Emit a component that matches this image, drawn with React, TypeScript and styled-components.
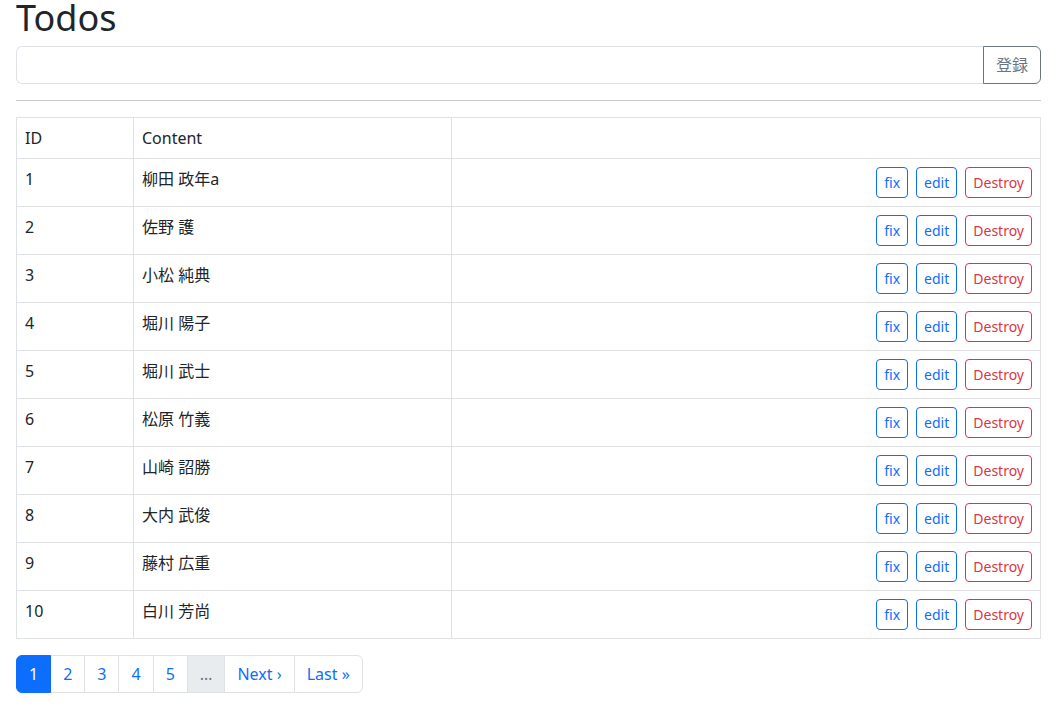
import React from 'react';
import styled, { createGlobalStyle } from 'styled-components';

const GlobalStyle = createGlobalStyle`
  * {
    box-sizing: border-box;
  }
  body {
    margin: 0;
    background: #fff;
    color: #212529;
    font-family: "Noto Sans", "Noto Sans CJK JP", sans-serif;
    font-size: 16px;
    line-height: 1.5;
  }
`;

const Page = styled.div`
  width: 1041px;
  padding-left: 16px;
`;

const Title = styled.h1`
  margin: 0 0 8px;
  font-size: 36px;
  font-weight: 400;
  line-height: 36px;
  padding-bottom: 2px;
  color: #212529;
`;

const InputGroup = styled.form`
  display: flex;
  height: 38px;
`;

const TextInput = styled.input`
  flex: 1;
  min-width: 0;
  height: 38px;
  padding: 6px 12px;
  font: inherit;
  border: 1px solid #dee2e6;
  border-right: none;
  border-radius: 6px 0 0 6px;
  outline: none;
`;

const SubmitButton = styled.button`
  height: 38px;
  padding: 6px 12px;
  font: inherit;
  white-space: nowrap;
  color: #6c757d;
  background: transparent;
  border: 1px solid #6c757d;
  border-radius: 0 6px 6px 0;
`;

const Rule = styled.hr`
  margin: 16px 0;
  border: 0;
  border-top: 1px solid #c8c9ca;
`;

const Table = styled.table`
  width: 100%;
  margin-bottom: 16px;
  border-collapse: collapse;
  font-size: 16px;
`;

const Cell = styled.td<{ $w?: number; $right?: boolean }>`
  width: ${(p) => (p.$w ? `${p.$w}px` : 'auto')};
  padding: 8px;
  border: 1px solid #dee2e6;
  vertical-align: top;
  text-align: ${(p) => (p.$right ? 'right' : 'left')};
  line-height: 24px;
`;

const Actions = styled.div`
  display: flex;
  justify-content: flex-end;
  gap: 8px;
`;

const SmallButton = styled.button<{ $danger?: boolean }>`
  height: 31px;
  padding: 4px 7px;
  font: inherit;
  font-size: 14px;
  line-height: 21px;
  background: transparent;
  color: ${(p) => (p.$danger ? '#dc3545' : '#0d6efd')};
  border: 1px solid ${(p) => (p.$danger ? '#dc3545' : '#0d6efd')};
  border-radius: 4px;
`;

const Pager = styled.nav`
  display: flex;
`;

const PageLink = styled.span<{ $active?: boolean; $disabled?: boolean }>`
  display: block;
  padding: 6px 12px;
  margin-left: -1px;
  line-height: 24px;
  border: 1px solid ${(p) => (p.$active ? '#0d6efd' : '#dee2e6')};
  color: ${(p) => (p.$active ? '#fff' : p.$disabled ? '#6c757d' : '#0d6efd')};
  background: ${(p) => (p.$active ? '#0d6efd' : p.$disabled ? '#e9ecef' : '#fff')};
  position: relative;
  z-index: ${(p) => (p.$active ? 1 : 0)};

  &:first-child {
    margin-left: 0;
    border-radius: 6px 0 0 6px;
  }
  &:last-child {
    border-radius: 0 6px 6px 0;
  }
`;

const todos = [
  '柳田 政年a',
  '佐野 護',
  '小松 純典',
  '堀川 陽子',
  '堀川 武士',
  '松原 竹義',
  '山崎 詔勝',
  '大内 武俊',
  '藤村 広重',
  '白川 芳尚',
];

export default function App() {
  return (
    <Page>
      <GlobalStyle />
      <Title>Todos</Title>
      <InputGroup onSubmit={(e) => e.preventDefault()}>
        <TextInput type="text" />
        <SubmitButton type="submit">登録</SubmitButton>
      </InputGroup>
      <Rule />
      <Table>
        <tbody>
          <tr>
            <Cell $w={117}>ID</Cell>
            <Cell $w={318}>Content</Cell>
            <Cell />
          </tr>
          {todos.map((t, i) => (
            <tr key={i}>
              <Cell>{i + 1}</Cell>
              <Cell>{t}</Cell>
              <Cell $right>
                <Actions>
                  <SmallButton>fix</SmallButton>
                  <SmallButton>edit</SmallButton>
                  <SmallButton $danger>Destroy</SmallButton>
                </Actions>
              </Cell>
            </tr>
          ))}
        </tbody>
      </Table>
      <Pager>
        <PageLink $active>1</PageLink>
        <PageLink>2</PageLink>
        <PageLink>3</PageLink>
        <PageLink>4</PageLink>
        <PageLink>5</PageLink>
        <PageLink $disabled>…</PageLink>
        <PageLink>Next ›</PageLink>
        <PageLink>Last »</PageLink>
      </Pager>
    </Page>
  );
}
